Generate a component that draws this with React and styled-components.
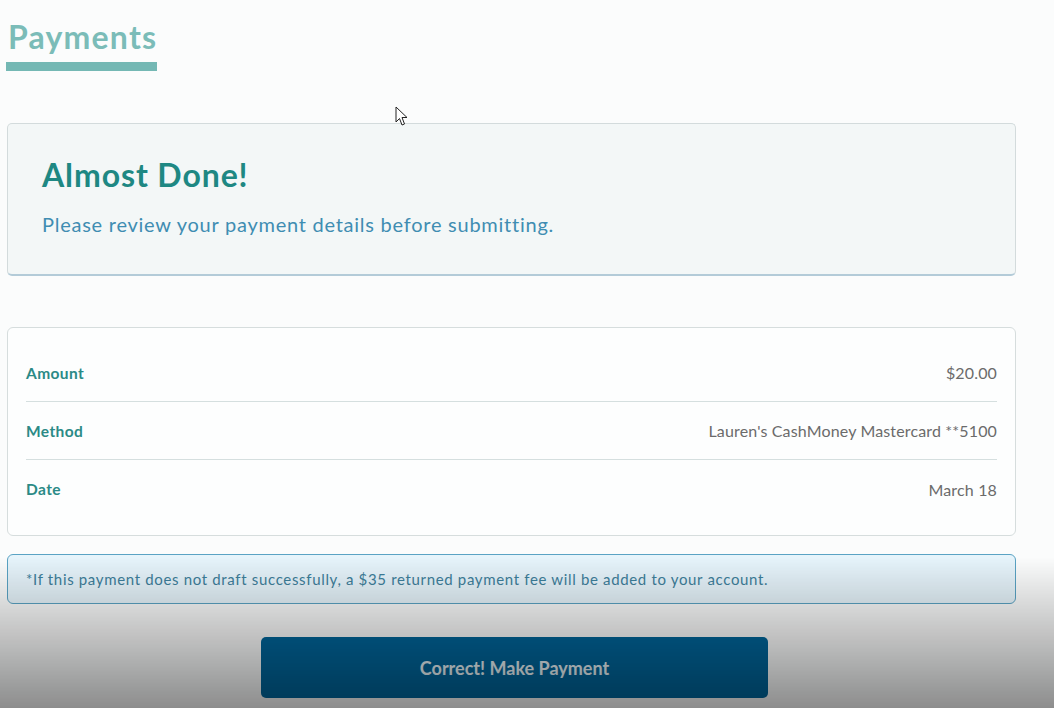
import * as React from 'react'
import styled, { createGlobalStyle } from 'styled-components'

const Global = createGlobalStyle`
  html, body {
    margin: 0;
    padding: 0;
    background: #fbfcfc;
    font-family: Lato, "Open Sans", sans-serif;
  }
`

const Page = styled.main`
  width: 1009px;
  padding: 0 0 40px 7px;
`

const Header = styled.header`
  display: inline-flex;
  flex-direction: column;
  padding-top: 17px;
  margin-left: -1px;
`

const Title = styled.h1`
  margin: 0 0 0 2px;
  font-size: 32px;
  line-height: 40px;
  font-weight: 700;
  color: #7bbcb8;
  letter-spacing: 1.2px;
`

const TitleBar = styled.span`
  display: block;
  width: 151px;
  height: 9px;
  margin-top: 5px;
  background: #74b8b4;
`

const Intro = styled.section`
  margin-top: 52px;
  height: 153px;
  box-sizing: border-box;
  padding: 31px 34px 0;
  background: #f3f7f7;
  border: 1px solid #d3dbdc;
  border-bottom: 2px solid #b3cbd8;
  border-radius: 5px;
`

const IntroTitle = styled.h2`
  margin: 0;
  font-size: 32px;
  line-height: 40px;
  font-weight: 700;
  color: #1e8883;
  letter-spacing: 0.9px;
`

const IntroText = styled.p`
  margin: 16px 0 0;
  font-size: 20px;
  line-height: 26px;
  color: #3f8db2;
  letter-spacing: 0.75px;
`

const Details = styled.section`
  margin-top: 51px;
  box-sizing: border-box;
  height: 209px;
  padding: 16px 18px;
  background: #fdfefe;
  border: 1px solid #d6dddd;
  border-radius: 6px;
`

const Row = styled.div`
  display: flex;
  align-items: center;
  justify-content: space-between;
  height: 58px;
  box-sizing: border-box;
  border-bottom: ${p => (p.$last ? 'none' : '1.5px solid #d5dfdf')};
`

const Label = styled.span`
  font-size: 15.5px;
  font-weight: 700;
  color: #2b8a86;
  letter-spacing: 0.4px;
`

const Value = styled.span`
  font-size: 16px;
  color: #6b6b6b;
  letter-spacing: 0.15px;
`

const Notice = styled.p`
  margin: 18px 0 0;
  height: 50px;
  box-sizing: border-box;
  display: flex;
  align-items: center;
  padding: 0 18px;
  background: #e6f4fb;
  border: 1.5px solid #5aa3c4;
  border-radius: 6px;
  font-size: 15px;
  letter-spacing: 0.66px;
  color: #3e809c;
`

const Actions = styled.div`
  display: flex;
  justify-content: center;
  margin-top: 33px;
`

const Submit = styled.button`
  width: 507px;
  height: 61px;
  margin-left: 6px;
  border: none;
  border-radius: 5px;
  background: #00659a;
  color: #e8f3f8;
  font-family: Lato, "Open Sans", sans-serif;
  font-size: 18px;
  font-weight: 700;
  cursor: pointer;
`

const Shade = styled.div`
  position: fixed;
  left: 0;
  right: 0;
  bottom: 0;
  height: 151px;
  pointer-events: none;
  background: linear-gradient(to bottom, rgba(0, 0, 0, 0) 0%, rgba(0, 0, 0, 0.44) 100%);
`

const Cursor = styled.svg`
  position: absolute;
  left: 395px;
  top: 106px;
  pointer-events: none;
`

const rows = [
  { label: 'Amount', value: '$20.00' },
  { label: 'Method', value: "Lauren's CashMoney Mastercard **5100" },
  { label: 'Date', value: 'March 18' },
]

export default function App() {
  return (
    <>
      <Global />
      <Page>
        <Header>
          <Title>Payments</Title>
          <TitleBar />
        </Header>
        <Intro>
          <IntroTitle>Almost Done!</IntroTitle>
          <IntroText>Please review your payment details before submitting.</IntroText>
        </Intro>
        <Details>
          {rows.map((r, i) => (
            <Row key={r.label} $last={i === rows.length - 1}>
              <Label>{r.label}</Label>
              <Value>{r.value}</Value>
            </Row>
          ))}
        </Details>
        <Notice>
          *If this payment does not draft successfully, a $35 returned payment fee will be added to your account.
        </Notice>
        <Actions>
          <Submit type="submit">Correct! Make Payment</Submit>
        </Actions>
      </Page>
      <Cursor width="14" height="22" viewBox="0 0 14 22">
        <path d="M1 1 L1 16 L4.5 12.5 L7 19 L9.5 18 L7 11.5 L12 11.5 Z" fill="#fff" stroke="#222" strokeWidth="1" strokeLinejoin="round" />
      </Cursor>
      <Shade />
    </>
  )
}
